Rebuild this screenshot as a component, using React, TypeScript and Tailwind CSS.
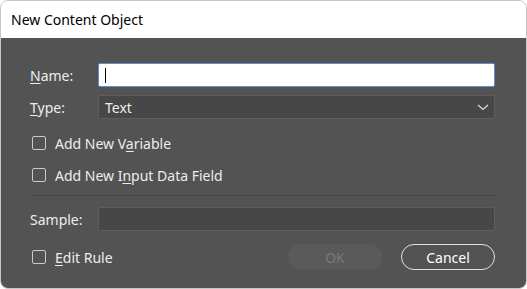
// @ts-nocheck
import React from 'react';

const Key = ({ children }) => <span className="underline underline-offset-[2px]">{children}</span>;

const Check = ({ children }) => (
  <label className="flex items-center gap-[9px] h-[14px] pl-[2px]">
    <span className="w-[14px] h-[14px] border border-[#c9c9c9] rounded-[2px] shrink-0" />
    <span>{children}</span>
  </label>
);

export default function App() {
  return (
    <div className="w-[527px] h-[289px] bg-white font-['Noto_Sans',sans-serif]">
      <div className="w-full h-full rounded-[8px] border border-[#c6c6c6] overflow-hidden flex flex-col">
        {/* Title bar */}
        <div className="h-[37px] bg-white pl-[10px] flex items-center text-[14px] text-black shrink-0">
          New Content Object
        </div>

        {/* Body */}
        <div className="flex-1 bg-[#535353] pl-[29px] pr-[31px] pt-[25px] text-[14px] text-[#ededed]">
          <div className="flex items-center h-[24px]">
            <div className="w-[68px]"><Key>N</Key>ame:</div>
            <div className="flex-1 h-[24px] bg-white border border-[#5b8fd1] rounded-[2px] flex items-center pl-[6px]">
              <span className="w-[1px] h-[15px] bg-black" />
            </div>
          </div>

          <div className="flex items-center h-[24px] mt-[8px]">
            <div className="w-[68px]"><Key>T</Key>ype:</div>
            <div className="flex-1 h-[24px] bg-[#474747] border border-[#5e5e5e] rounded-[2px] flex items-center justify-between pl-[6px] pr-[5px]">
              <span>Text</span>
              <svg width="12" height="7" viewBox="0 0 12 7" fill="none">
                <path d="M1 1l5 4.5L11 1" stroke="#dcdcdc" strokeWidth="1.2" />
              </svg>
            </div>
          </div>

          <div className="mt-[17px]">
            <Check>Add New V<Key>a</Key>riable</Check>
          </div>
          <div className="mt-[18px]">
            <Check>Add New I<Key>n</Key>put Data Field</Check>
          </div>

          <div className="h-[1px] bg-[#474747] mt-[13px]" />

          <div className="flex items-center h-[24px] mt-[11px]">
            <div className="w-[68px]">Sample:</div>
            <div className="flex-1 h-[24px] bg-[#474747] border border-[#5e5e5e] rounded-[2px]" />
          </div>

          <div className="flex items-center justify-between mt-[13px]">
            <Check><Key>E</Key>dit Rule</Check>
            <div className="flex gap-[19px]">
              <button className="w-[94px] h-[26px] rounded-full bg-[#5a5a5a] text-[#787878] text-[14px]">OK</button>
              <button className="w-[94px] h-[26px] rounded-full border border-[#e2e2e2] text-white text-[14px]">Cancel</button>
            </div>
          </div>
        </div>
      </div>
    </div>
  );
}
